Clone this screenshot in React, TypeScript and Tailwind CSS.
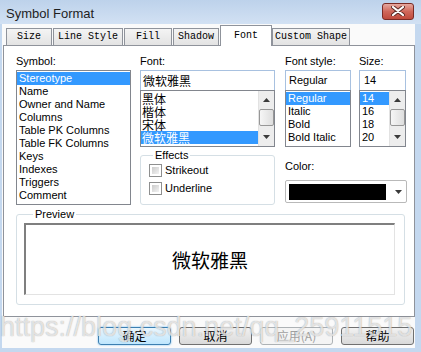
import React from 'react';

const SYMBOLS = ['Stereotype', 'Name', 'Owner and Name', 'Columns', 'Table PK Columns', 'Table FK Columns', 'Keys', 'Indexes', 'Triggers', 'Comment'];
const FONTS = ['黑体', '楷体', '宋体', '微软雅黑'];
const STYLES = ['Regular', 'Italic', 'Bold', 'Bold Italic'];
const SIZES = ['14', '16', '18', '20'];

const TABS = [
  { label: 'Size', w: 'w-[46px]' },
  { label: 'Line Style', w: 'w-[70px]' },
  { label: 'Fill', w: 'w-[48px]' },
  { label: 'Shadow', w: 'w-[46px]' },
  { label: 'Font', w: 'w-[52px]', active: true },
  { label: 'Custom Shape', w: 'w-[78px]' },
];

const Arrow: React.FC<{ up?: boolean }> = ({ up }) => (
  <svg width="7" height="4" viewBox="0 0 7 4">
    <path d={up ? 'M3.5 0L7 4H0Z' : 'M0 0H7L3.5 4Z'} fill="#3a3a3a" />
  </svg>
);

const ScrollBar: React.FC = () => (
  <div className="w-[16px] h-full flex flex-col items-center bg-[#ededed] border-l border-[#e2e2e2]">
    <div className="h-[18px] flex items-center justify-center">
      <Arrow up />
    </div>
    <div className="flex-1 flex items-start justify-center">
      <div className="w-[15px] h-[17px] rounded-[2px] border border-[#979797] bg-gradient-to-r from-[#f6f6f6] to-[#dedede]" />
    </div>
    <div className="h-[18px] flex items-center justify-center">
      <Arrow />
    </div>
  </div>
);

const Checkbox: React.FC<{ label: string }> = ({ label }) => (
  <div className="flex items-center gap-[3px] h-[14px]">
    <div className="w-[13px] h-[13px] border border-[#8e8f8f] bg-white p-[2px]">
      <div className="w-full h-full bg-gradient-to-br from-[#cbcbcb] to-[#f3f3f3]" />
    </div>
    <span className="text-[11px] leading-[13px]">{label}</span>
  </div>
);

const Button: React.FC<{ label: string; primary?: boolean; disabled?: boolean }> = ({ label, primary, disabled }) => (
  <div
    className={`w-[73px] h-[18px] rounded-[3px] border flex items-center justify-center text-[12px] leading-[14px] bg-gradient-to-b ${
      primary
        ? 'border-[#3c7fb1] from-[#eaf6fd] to-[#bee6fd] shadow-[0_0_2px_#5fb6f2]'
        : disabled
        ? 'border-[#adb2b5] from-[#f4f4f4] to-[#f4f4f4] text-[#a0a0a0]'
        : 'border-[#707070] from-[#f2f2f2] to-[#d9d9d9]'
    }`}
  >
    {label}
  </div>
);

const App: React.FC = () => {
  return (
    <div className="relative w-[421px] h-[352px] overflow-hidden bg-[#c4d8ef] font-['Liberation_Sans','Noto_Sans_CJK_SC',sans-serif] text-black flex flex-col">
      {/* title bar */}
      <div className="h-[24px] flex items-center justify-between pl-[6px] pr-[7px] bg-gradient-to-b from-[#bdd2eb] to-[#d2e1f3]">
        <span className="text-[13px] leading-[15px] text-[#1e1e1e] mt-[2px]">Symbol Format</span>
        <div className="w-[32px] h-[17px] mb-[2px] rounded-[3px] border border-[#7a2b25] bg-gradient-to-b from-[#e5a89f] via-[#d0675a] to-[#c04a3c] flex items-center justify-center">
          <svg width="14" height="10" viewBox="0 0 14 10">
            <path d="M2 1L12 9M12 1L2 9" stroke="#5a2a25" strokeWidth="4" strokeLinecap="round" />
            <path d="M2 1L12 9M12 1L2 9" stroke="#ffffff" strokeWidth="2.2" strokeLinecap="round" />
          </svg>
        </div>
      </div>

      {/* body */}
      <div className="ml-[2px] mr-[6px] h-[324px] bg-[#fafafa] flex flex-col">
        {/* tabs */}
        <div className="h-[21px] flex items-end pl-[4px] font-['Liberation_Mono',monospace] text-[10px]">
          {TABS.map((t) =>
            t.active ? (
              <div
                key={t.label}
                className={`${t.w} h-[21px] -mb-px relative z-10 bg-white border border-b-0 border-[#8f939b] flex justify-center pt-[4px] leading-[12px]`}
              >
                {t.label}
              </div>
            ) : (
              <div
                key={t.label}
                className={`${t.w} h-[17px] mr-px border border-b-0 border-[#8f939b] bg-gradient-to-b from-[#f4f4f4] to-[#e3e3e3] flex items-center justify-center leading-[12px]`}
              >
                {t.label}
              </div>
            )
          )}
        </div>

        {/* panel */}
        <div className="ml-px w-[412px] h-[272px] border border-[#8f939b] bg-white pl-[12px] pt-[9px] text-[11px]">
          <div className="flex">
            {/* symbol column */}
            <div className="w-[115px] flex flex-col">
              <div className="h-[15px] leading-[13px]">Symbol:</div>
              <div className="h-[135px] border border-[#82868e] pt-px">
                {SYMBOLS.map((s, i) => (
                  <div key={s} className={`h-[13px] leading-[13px] pl-[2px] ${i === 0 ? 'bg-[#3399ff] text-white' : ''}`}>
                    {s}
                  </div>
                ))}
              </div>
            </div>

            {/* font column */}
            <div className="w-[135px] ml-[9px] flex flex-col">
              <div className="h-[15px] leading-[13px]">Font:</div>
              <div className="h-[21px] border border-[#a8c1e0] flex items-center pl-[2px] font-['Noto_Sans_CJK_SC',sans-serif] text-[12px] leading-[14px]">
                微软雅黑
              </div>
              <div className="h-[57px] -mt-px border border-[#82868e] flex">
                <div className="flex-1 pt-px font-['Noto_Sans_CJK_SC',sans-serif] text-[12px]">
                  {FONTS.map((f, i) => (
                    <div key={f} className={`h-[13px] leading-[13px] pl-[1px] ${i === 3 ? 'bg-[#3399ff] text-white' : ''}`}>
                      {f}
                    </div>
                  ))}
                </div>
                <ScrollBar />
              </div>
              <fieldset className="mt-[2px] h-[56px] border border-[#d5dfe5] rounded-[3px] pl-[8px]">
                <legend className="ml-[4px] px-[2px] leading-[13px]">Effects</legend>
                <div className="flex flex-col gap-[4px] mt-px">
                  <Checkbox label="Strikeout" />
                  <Checkbox label="Underline" />
                </div>
              </fieldset>
            </div>

            {/* style + size + color */}
            <div className="ml-[10px] flex flex-col">
              <div className="flex">
                <div className="w-[66px] flex flex-col">
                  <div className="h-[15px] leading-[13px]">Font style:</div>
                  <div className="h-[21px] border border-[#a8c1e0] flex items-center pl-[3px]">Regular</div>
                  <div className="h-[57px] -mt-px border border-[#82868e] pt-px">
                    {STYLES.map((s, i) => (
                      <div key={s} className={`h-[13px] leading-[13px] pl-[2px] ${i === 0 ? 'bg-[#3399ff] text-white' : ''}`}>
                        {s}
                      </div>
                    ))}
                  </div>
                </div>
                <div className="w-[47px] ml-[8px] flex flex-col">
                  <div className="h-[15px] leading-[13px]">Size:</div>
                  <div className="h-[21px] border border-[#a8c1e0] flex items-center pl-[4px]">14</div>
                  <div className="h-[57px] -mt-px border border-[#82868e] flex">
                    <div className="flex-1 pt-px">
                      {SIZES.map((s, i) => (
                        <div key={s} className={`h-[13px] leading-[13px] pl-[2px] ${i === 0 ? 'bg-[#3399ff] text-white' : ''}`}>
                          {s}
                        </div>
                      ))}
                    </div>
                    <ScrollBar />
                  </div>
                </div>
              </div>
              <div className="mt-[13px] h-[20px] leading-[13px]">Color:</div>
              <div className="w-[122px] h-[23px] border border-[#b9b9b9] rounded-[2px] flex items-center pl-[3px] pr-[4px]">
                <div className="w-[97px] h-[16px] bg-black" />
                <div className="flex-1 flex justify-end">
                  <Arrow />
                </div>
              </div>
            </div>
          </div>

          {/* preview */}
          <fieldset className="mt-[3px] w-[389px] h-[97px] border border-[#d5dfe5] rounded-[3px] pl-[7px]">
            <legend className="ml-[9px] px-[2px] leading-[13px]">Preview</legend>
            <div className="mt-[2px] w-[371px] h-[72px] bg-white border-t-2 border-l-2 border-r border-b border-t-[#7f7f7f] border-l-[#7f7f7f] border-r-[#e3e3e3] border-b-[#e3e3e3] flex items-center justify-center font-['Noto_Sans_CJK_SC',sans-serif] text-[19px] leading-[22px]">
              微软雅黑
            </div>
          </fieldset>
        </div>

        {/* buttons */}
        <div className="mt-[10px] flex justify-end gap-[8px] pr-px font-['Noto_Sans_CJK_SC','Liberation_Sans',sans-serif]">
          <Button label="确定" primary />
          <Button label="取消" />
          <Button label="应用(A)" disabled />
          <Button label="帮助" />
        </div>
      </div>

      {/* watermark */}
      <div className="absolute left-0 top-[314px] pointer-events-none whitespace-nowrap text-[27px] leading-none text-white/70 [text-shadow:0_0_1px_rgba(80,80,80,0.55)]">
        https://blog.csdn.net/qq_25911515
      </div>
    </div>
  );
};

export default App;
